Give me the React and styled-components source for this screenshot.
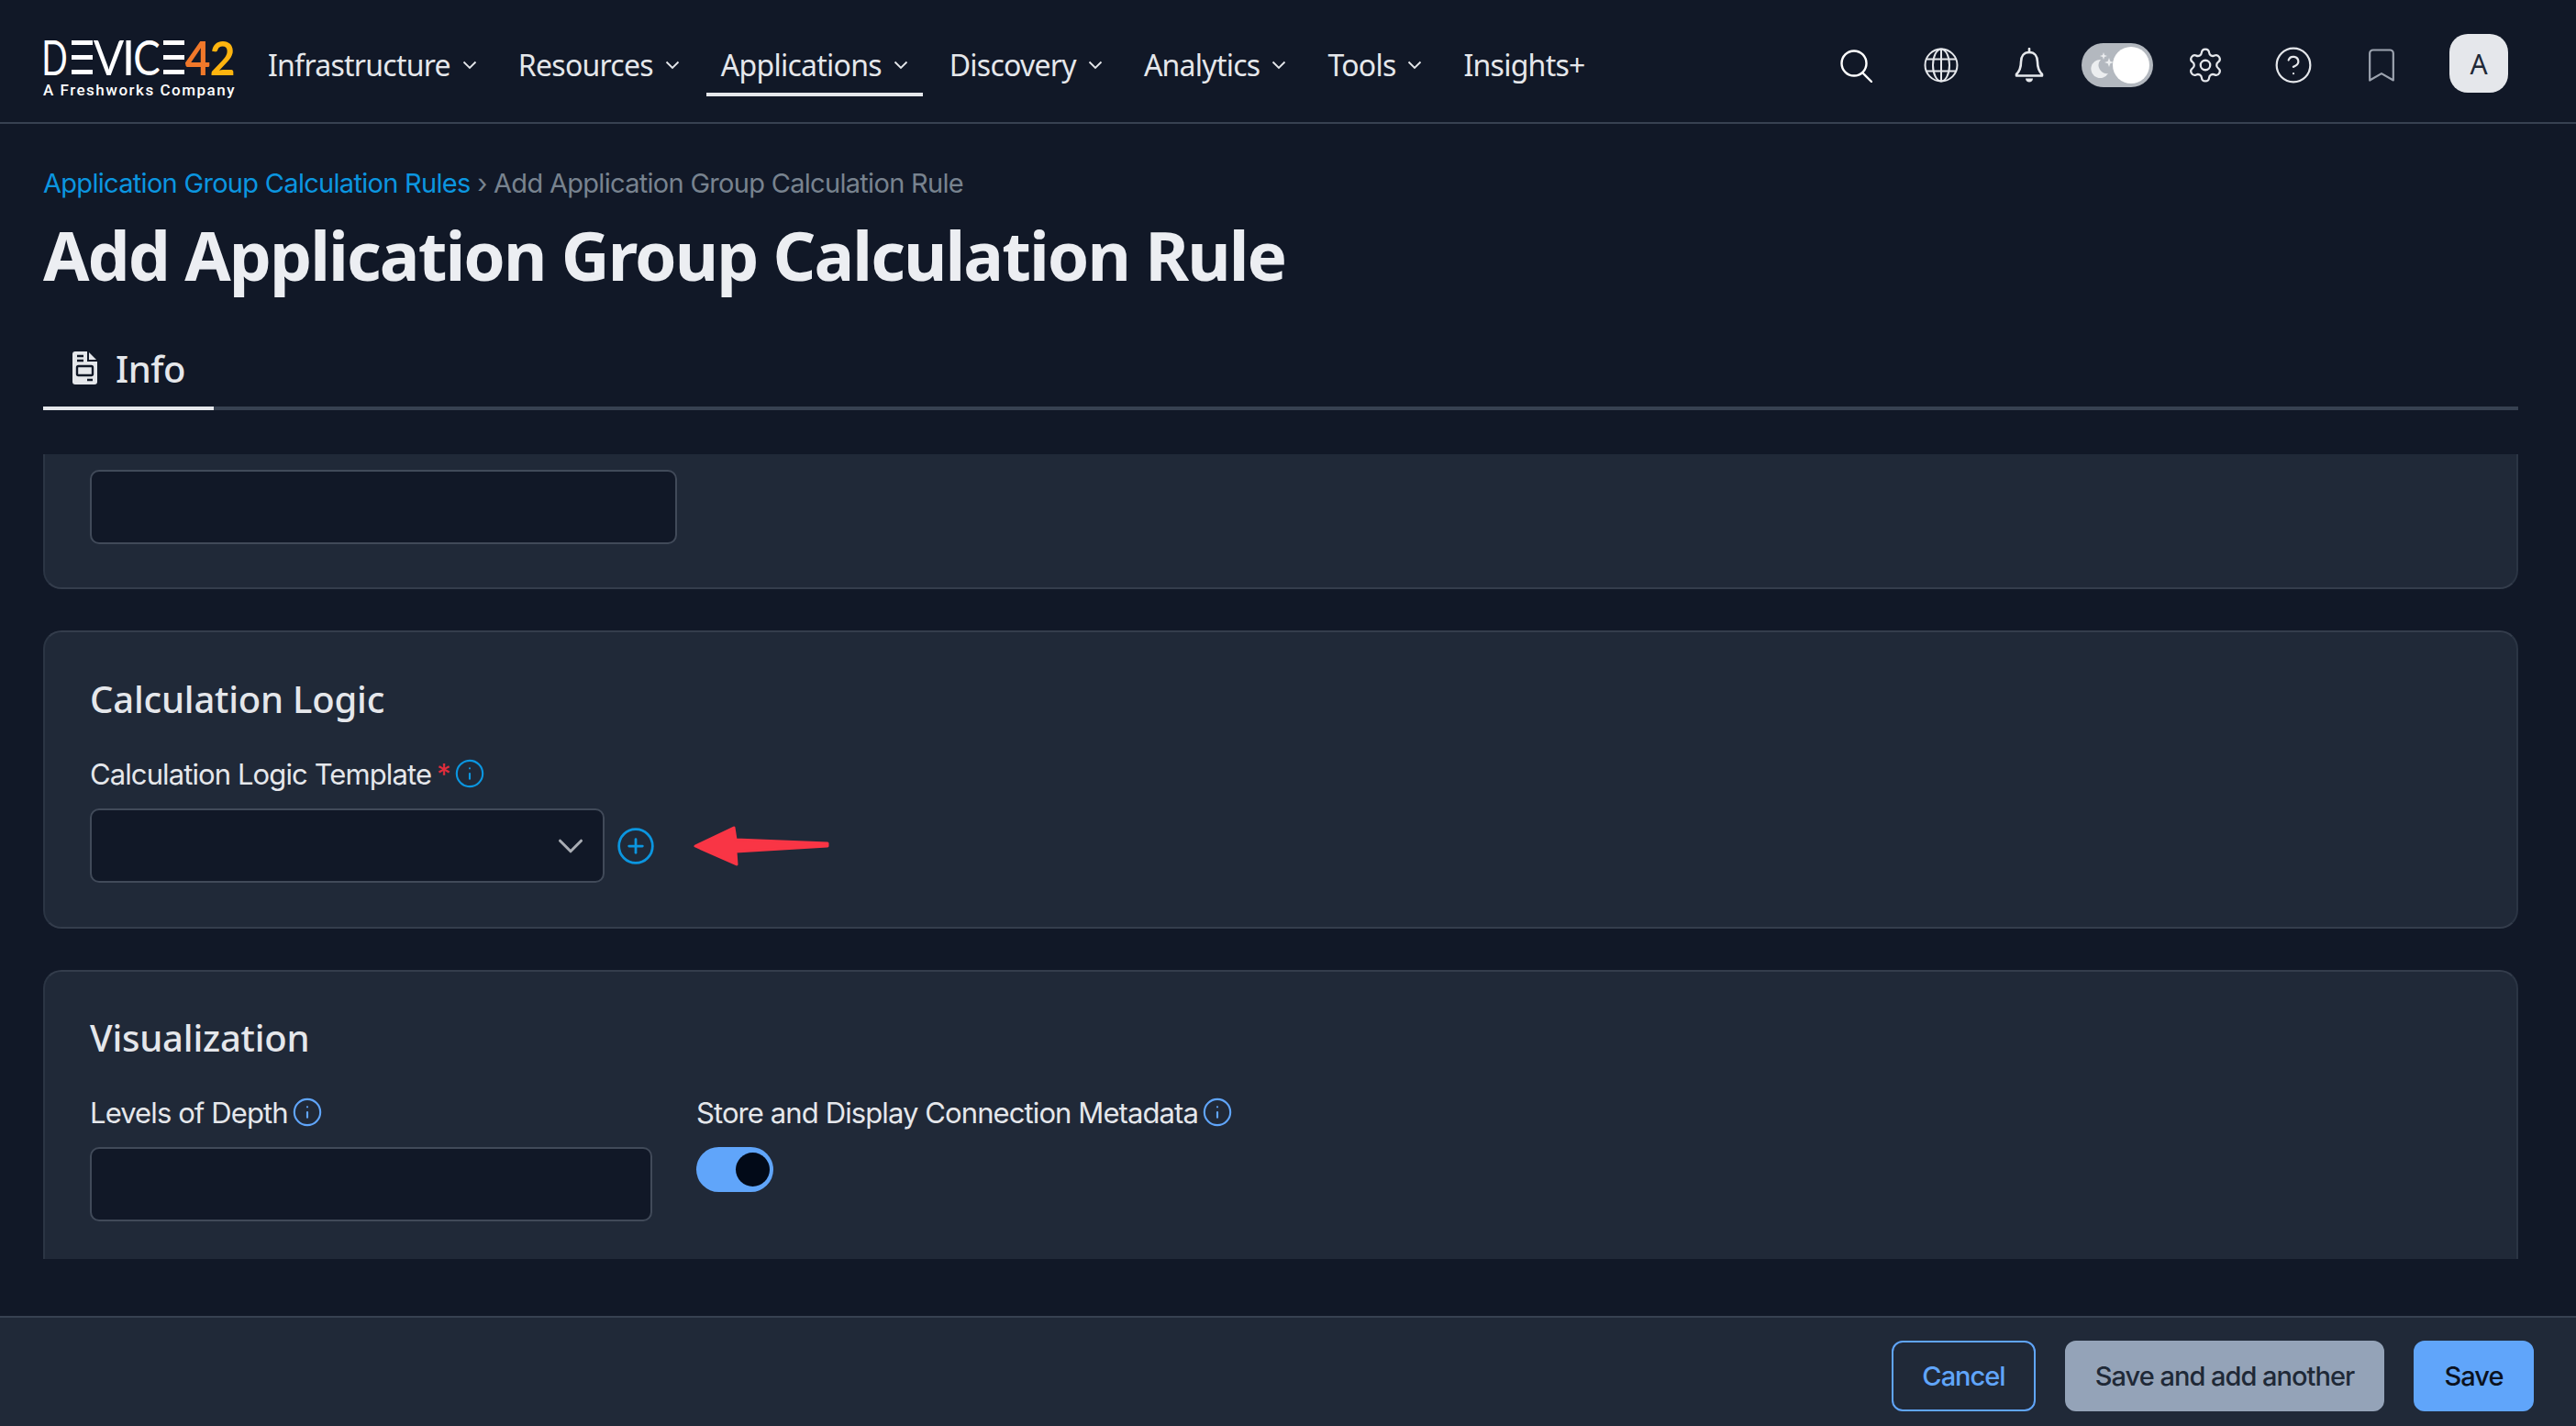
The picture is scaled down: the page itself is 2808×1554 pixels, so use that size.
import React from 'react';
import styled, { createGlobalStyle } from 'styled-components';
import { ChevronDown, CircleHelp, Info, Settings, CirclePlus, Bookmark } from 'lucide-react';

const navFont = `'Noto Sans', 'Open Sans', sans-serif`;
const bodyFont = `Inter, 'Liberation Sans', sans-serif`;

const GlobalStyle = createGlobalStyle`
  html, body { margin: 0; padding: 0; background: #111827; }
  * { box-sizing: border-box; }
`;

const Page = styled.div`
  width: 2808px;
  height: 1554px;
  display: flex;
  flex-direction: column;
  overflow: hidden;
  background: #111827;
  color: #e5e7eb;
`;

const Header = styled.header`
  height: 135px;
  flex-shrink: 0;
  display: flex;
  align-items: flex-start;
  padding-left: 47px;
  border-bottom: 2px solid #374151;
`;

const Logo = styled.div`
  width: 229px;
  padding-top: 44px;
  display: flex;
  flex-direction: column;
`;

const LogoWord = styled.div`
  height: 37px;
  display: flex;
  align-items: center;
  font-family: Lato, sans-serif;
  font-size: 52px;
  line-height: 37px;
  color: #fff;
`;

const LogoLetter = styled.span`
  display: flex;
  justify-content: center;
  width: ${(p) => p.$w}px;
  margin-left: ${(p) => p.$ml || 0}px;
  color: ${(p) => p.$color || '#fff'};
  font-weight: ${(p) => p.$weight || 400};
  transform: scaleX(${(p) => p.$sx || 1});
`;

const Stripes = styled.span`
  width: ${(p) => p.$w}px;
  margin-left: ${(p) => p.$ml || 0}px;
  height: 37px;
  display: flex;
  flex-direction: column;
  justify-content: space-between;
  & > i {
    display: block;
    height: 5px;
    background: #fff;
  }
`;

const LogoTag = styled.div`
  margin-top: 8px;
  font-family: Roboto, sans-serif;
  font-size: 17px;
  line-height: 18px;
  font-weight: 500;
  letter-spacing: 1.5px;
  color: #fff;
  white-space: nowrap;
`;

const Nav = styled.nav`
  display: flex;
  gap: 13px;
`;

const NavItem = styled.a`
  height: 105px;
  padding: 40px 16px 0;
  display: flex;
  align-items: center;
  gap: 13px;
  font-family: ${navFont};
  font-size: 32px;
  letter-spacing: -0.75px;
  line-height: 60px;
  color: #e5e7eb;
  border-bottom: 4px solid ${(p) => (p.$active ? '#e5e7eb' : 'transparent')};
  white-space: nowrap;
`;

const Tools = styled.div`
  margin-left: auto;
  padding: 37px 74px 0 0;
  display: flex;
  align-items: flex-start;
`;

const ToolCell = styled.div`
  width: 96px;
  height: 64px;
  margin-top: 2px;
  display: flex;
  align-items: center;
  justify-content: center;
  color: ${(p) => p.$color || '#e5e7eb'};
`;

const ThemeToggle = styled.div`
  position: relative;
  width: 78px;
  height: 48px;
  border-radius: 24px;
  background: #b3b8bf;
`;

const ThemeKnob = styled.span`
  position: absolute;
  top: 4px;
  right: 4px;
  width: 40px;
  height: 40px;
  border-radius: 50%;
  background: #fff;
`;

const ThemeMoon = styled.svg`
  position: absolute;
  left: 8px;
  top: 9px;
`;

const Avatar = styled.div`
  width: 64px;
  height: 64px;
  margin-left: 26px;
  border-radius: 20px;
  background: #e5e7eb;
  color: #1f2937;
  display: flex;
  align-items: center;
  justify-content: center;
  font-family: ${navFont};
  font-size: 30px;
`;

const Main = styled.main`
  flex: 1;
  min-height: 0;
  padding: 44px 63px 0 47px;
  display: flex;
  flex-direction: column;
`;

const Crumbs = styled.div`
  font-family: ${bodyFont};
  font-size: 29px;
  line-height: 42px;
  letter-spacing: -0.7px;
  color: #78838f;
`;

const CrumbLink = styled.a`
  color: #0b96e0;
`;

const Title = styled.h1`
  margin: 12px 0 0;
  font-family: ${navFont};
  font-size: 73px;
  line-height: 90px;
  font-weight: 700;
  letter-spacing: -1.9px;
  color: #eceef2;
`;

const TabBar = styled.div`
  margin-top: 43px;
  display: flex;
  border-bottom: 4px solid #374151;
`;

const Tab = styled.div`
  width: 186px;
  height: 81px;
  margin-bottom: -4px;
  padding: 0 0 7px 32px;
  display: flex;
  align-items: center;
  gap: 20px;
  border-bottom: 4px solid #e5e7eb;
  font-family: ${navFont};
  font-size: 40px;
  font-weight: 500;
  letter-spacing: -0.5px;
  color: #e5e7eb;
`;

const Scroller = styled.div`
  height: 877px;
  margin-top: 48px;
  flex-shrink: 0;
  overflow: hidden;
  display: flex;
  flex-direction: column;
  gap: 45px;
`;

const Card = styled.section`
  flex-shrink: 0;
  height: ${(p) => p.$h}px;
  padding: ${(p) => p.$pt}px 49px 0;
  background: #202938;
  border: 2px solid #2b3544;
  border-top: ${(p) => (p.$cut ? 'none' : '2px solid #343d4c')};
  border-bottom: 2px solid #343d4c;
  border-radius: ${(p) => (p.$cut ? '0 0 20px 20px' : '20px')};
`;

const CardTitle = styled.h2`
  margin: 0;
  font-family: ${navFont};
  font-size: 40px;
  line-height: 54px;
  font-weight: 500;
  letter-spacing: -0.2px;
  color: #e5e7eb;
`;

const Label = styled.label`
  display: flex;
  align-items: center;
  gap: 4px;
  height: 40px;
  margin-top: ${(p) => p.$mt || 0}px;
  font-family: ${bodyFont};
  font-size: 31px;
  letter-spacing: -0.9px;
  color: #e5e7eb;
  white-space: nowrap;
  & > em {
    font-style: normal;
    color: #e02d3c;
    margin-left: 2px;
  }
  & > svg {
    color: ${(p) => p.$iconColor || '#60a5fa'};
  }
`;

const Input = styled.div`
  width: ${(p) => p.$w}px;
  height: 81px;
  border: 2px solid #414a59;
  border-radius: 10px;
  background: #111827;
`;

const SelectBox = styled(Input)`
  display: flex;
  align-items: center;
  justify-content: flex-end;
  padding-right: 12px;
  color: #a9adb4;
`;

const FieldRow = styled.div`
  margin-top: 18px;
  display: flex;
  align-items: center;
  gap: 12px;
  color: #0b96e0;
`;

const Arrow = styled.svg`
  margin-left: 29px;
`;

const VisGrid = styled.div`
  margin-top: 34px;
  display: grid;
  grid-template-columns: 613px 1fr;
  column-gap: 48px;
  row-gap: 18px;
`;

const Switch = styled.div`
  width: 84px;
  height: 49px;
  border-radius: 25px;
  background: #60a5fa;
  display: flex;
  align-items: center;
  justify-content: flex-end;
  padding-right: 4px;
  & > span {
    width: 37px;
    height: 37px;
    border-radius: 50%;
    background: #020a18;
  }
`;

const Footer = styled.footer`
  height: 120px;
  flex-shrink: 0;
  margin-top: auto;
  padding: 25px 46px 0 0;
  background: #202938;
  border-top: 2px solid #374151;
  display: flex;
  justify-content: flex-end;
  gap: 32px;
`;

const Button = styled.button`
  height: 77px;
  width: ${(p) => p.$w}px;
  padding: 0;
  border-radius: 12px;
  border: 2px solid ${(p) => p.$border};
  background: ${(p) => p.$bg};
  color: ${(p) => p.$color};
  font-family: ${bodyFont};
  font-size: 29px;
  font-weight: 500;
  letter-spacing: -1px;
`;

const navItems = [
  { label: 'Infrastructure', menu: true },
  { label: 'Resources', menu: true },
  { label: 'Applications', menu: true, active: true },
  { label: 'Discovery', menu: true },
  { label: 'Analytics', menu: true },
  { label: 'Tools', menu: true },
  { label: 'Insights+' },
];

function LogoMark() {
  return (
    <Logo>
      <LogoWord>
        <LogoLetter $w={25} $sx={0.72}>D</LogoLetter>
        <Stripes $w={23} $ml={6}><i /><i /><i /></Stripes>
        <LogoLetter $w={35} $sx={0.95}>V</LogoLetter>
        <LogoLetter $w={8}>I</LogoLetter>
        <LogoLetter $w={28} $ml={2} $sx={0.85}>C</LogoLetter>
        <Stripes $w={23} $ml={4}><i /><i /><i /></Stripes>
        <LogoLetter $w={29} $color="#f0782a" $weight={700} $sx={0.92}>4</LogoLetter>
        <LogoLetter $w={25} $color="#fdb40f" $weight={700} $sx={0.92}>2</LogoLetter>
      </LogoWord>
      <LogoTag>A Freshworks Company</LogoTag>
    </Logo>
  );
}

function NavChevron() {
  return (
    <svg width="16" height="10" viewBox="0 0 16 10" fill="none" stroke="currentColor" strokeWidth="1.800">
      <path d="M1.500 1.500L8 8l6.500-6.500" />
    </svg>
  );
}

function SearchIcon() {
  return (
    <svg width="42" height="38" viewBox="-6 -1 42 38" fill="none" stroke="currentColor" strokeWidth="2.400">
      <circle cx="16" cy="16" r="13.500" />
      <path d="M26 27l9 9" strokeLinecap="round" />
    </svg>
  );
}

function GlobeIcon() {
  return (
    <svg width="38" height="38" viewBox="0 0 38 38" fill="none" stroke="currentColor" strokeWidth="2">
      <circle cx="19" cy="19" r="17.500" />
      <ellipse cx="19" cy="19" rx="9" ry="17.500" />
      <path d="M19 1.500v35M3 12.500h32M3 25.500h32" />
    </svg>
  );
}

function BellIcon() {
  return (
    <svg width="34" height="38" viewBox="0 0 34 38" fill="none" stroke="currentColor" strokeWidth="2.600">
      <path d="M17 5c-6 0-9 4.500-9 10.500 0 6-1.500 10-5 13.500v1.500h28V29c-3.500-3.500-5-7.500-5-13.500C26 9.500 23 5 17 5z" strokeLinejoin="round" />
      <path d="M17 1v4" strokeLinecap="round" />
      <path d="M13 33.500h8c0 2.500-2 4-4 4s-4-1.500-4-4z" fill="currentColor" stroke="none" />
    </svg>
  );
}

function DocIcon() {
  return (
    <svg width="27" height="36" viewBox="0 0 27 36" fill="none">
      <path d="M3 0h14l10 10v23a3 3 0 0 1-3 3H3a3 3 0 0 1-3-3V3a3 3 0 0 1 3-3z" fill="#e5e7eb" />
      <path d="M17 0v10h10" stroke="#111827" strokeWidth="2" />
      <path d="M5 5h7M5 10h7M16 31h6" stroke="#111827" strokeWidth="2.400" />
      <rect x="5" y="16" width="17" height="10" rx="1.500" fill="none" stroke="#111827" strokeWidth="2.400" />
    </svg>
  );
}

export default function App() {
  return (
    <Page>
      <GlobalStyle />
      <Header>
        <LogoMark />
        <Nav>
          {navItems.map((item) => (
            <NavItem key={item.label} $active={item.active}>
              {item.label}
              {item.menu && <NavChevron />}
            </NavItem>
          ))}
        </Nav>
        <Tools>
          <ToolCell $color="#fff"><SearchIcon /></ToolCell>
          <ToolCell><GlobeIcon /></ToolCell>
          <ToolCell><BellIcon /></ToolCell>
          <ToolCell>
            <ThemeToggle>
              <ThemeMoon width="30" height="30" viewBox="0 0 30 30">
                <path d="M13 9a10 10 0 1 0 8 15 9 9 0 0 1-8-15z" fill="#eceef0" />
                <path d="M16 1l1 3 3 1-3 1-1 3-1-3-3-1 3-1zM22 7l1.300 3.700L27 12l-3.700 1.300L22 17l-1.300-3.700L17 12l3.700-1.300z" fill="#eceef0" />
              </ThemeMoon>
              <ThemeKnob />
            </ThemeToggle>
          </ToolCell>
          <ToolCell><Settings size={42} strokeWidth={1.3} /></ToolCell>
          <ToolCell><CircleHelp size={44} strokeWidth={1.2} /></ToolCell>
          <ToolCell $color="#9ca3af"><Bookmark size={44} strokeWidth={1.2} /></ToolCell>
          <Avatar>A</Avatar>
        </Tools>
      </Header>

      <Main>
        <Crumbs>
          <CrumbLink>Application Group Calculation Rules</CrumbLink> › Add Application Group Calculation Rule
        </Crumbs>
        <Title>Add Application Group Calculation Rule</Title>
        <TabBar>
          <Tab><DocIcon />Info</Tab>
        </TabBar>

        <Scroller>
          <Card $cut $h={147} $pt={17}>
            <Input $w={640} />
          </Card>

          <Card $h={325} $pt={46}>
            <CardTitle>Calculation Logic</CardTitle>
            <Label $iconColor="#0b96e0" $mt={34}>
              Calculation Logic Template <em>*</em>
              <Info size={34} strokeWidth={1.5} />
            </Label>
            <FieldRow>
              <SelectBox $w={561}><ChevronDown size={46} strokeWidth={1.6} /></SelectBox>
              <CirclePlus size={44} strokeWidth={1.5} />
              <Arrow width="150" height="46" viewBox="0 0 150 46">
                <path
                  d="M2 23 L44 3 L46 16 L146 20 L146 23 L46 29 L47 43 Z"
                  fill="#f93545"
                  stroke="#f93545"
                  strokeWidth="3"
                  strokeLinejoin="round"
                />
              </Arrow>
            </FieldRow>
          </Card>

          <Card $h={400} $pt={45}>
            <CardTitle>Visualization</CardTitle>
            <VisGrid>
              <Label>
                Levels of Depth
                <Info size={34} strokeWidth={1.5} />
              </Label>
              <Label>
                Store and Display Connection Metadata
                <Info size={34} strokeWidth={1.5} />
              </Label>
              <Input $w={613} />
              <Switch><span /></Switch>
            </VisGrid>
          </Card>
        </Scroller>
      </Main>

      <Footer>
        <Button $w={157} $border="#60a5fa" $bg="transparent" $color="#60a5fa">Cancel</Button>
        <Button $w={348} $border="#94a3b8" $bg="#94a3b8" $color="#1f2937">Save and add another</Button>
        <Button $w={131} $border="#60a5fa" $bg="#60a5fa" $color="#0b1220">Save</Button>
      </Footer>
    </Page>
  );
}
